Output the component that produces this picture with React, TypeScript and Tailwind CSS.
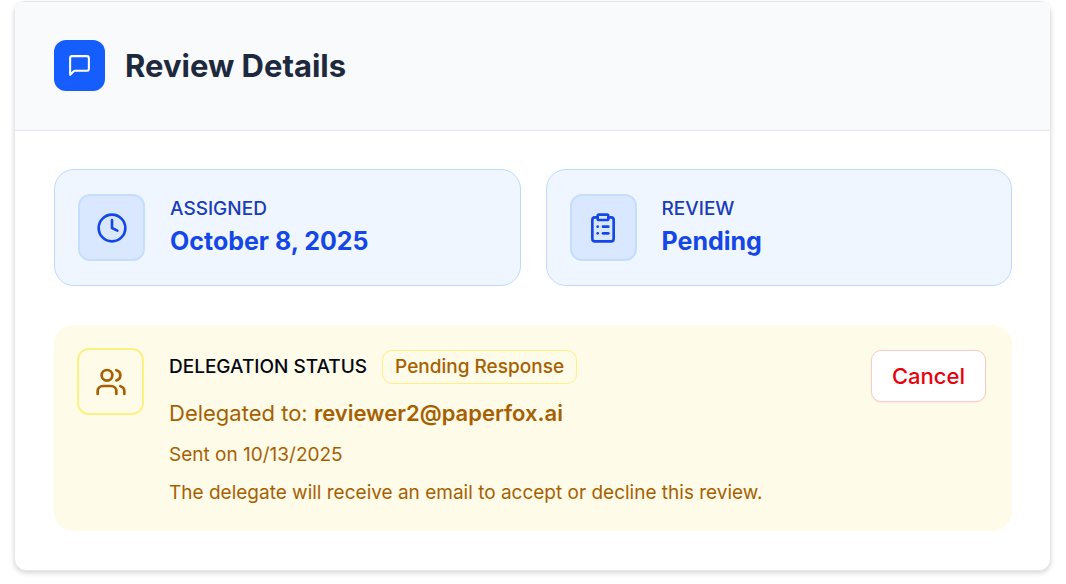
import type { ReactNode } from "react";
import { ClipboardList, Clock, Users } from "lucide-react";

const SUMMARY = [
  { label: "Assigned", value: "October 8, 2025", icon: Clock },
  { label: "Review", value: "Pending", icon: ClipboardList },
];

function IconTile({ className, children }: { className: string; children: ReactNode }) {
  return (
    <div className={`flex size-[67px] shrink-0 items-center justify-center rounded-xl border-2 ${className}`}>
      {children}
    </div>
  );
}

function MessageIcon() {
  return (
    <svg width="25" height="25" viewBox="0 0 24 24" fill="none" stroke="currentColor" strokeWidth="2" strokeLinecap="round" strokeLinejoin="round" aria-hidden="true">
      <path d="M21 15a2 2 0 0 1-2 2H7l-4 4V5a2 2 0 0 1 2-2h14a2 2 0 0 1 2 2z" />
    </svg>
  );
}

export default function App() {
  return (
    <main className="bg-white pt-px pr-[15px] pb-3 pl-[14px] font-['Inter','Liberation_Sans',sans-serif]">
      <section className="rounded-xl border border-gray-200 bg-white shadow-[0_2px_5px_rgba(0,0,0,0.16)]">
        <header className="flex items-center gap-5 border-b border-gray-200 bg-slate-50 px-[39px] pt-[38px] pb-[39px]">
          <div className="flex size-[51px] items-center justify-center rounded-xl bg-blue-600 text-white">
            <MessageIcon />
          </div>
          <h2 className="text-[31px] leading-10 font-bold text-slate-800">Review Details</h2>
        </header>

        <div className="flex flex-col gap-[39px] pt-[38px] pr-[38px] pb-[39px] pl-[39px]">
          <div className="grid grid-cols-2 gap-[25px]">
            {SUMMARY.map(({ label, value, icon: Icon }) => (
              <div key={label} className="flex items-center gap-[25px] rounded-[20px] border border-blue-200 bg-blue-50 px-[23px] py-6">
                <IconTile className="border-[#c5deff] bg-[#dae8ff] text-blue-700">
                  <Icon size={32} />
                </IconTile>
                <div className="pb-0.5">
                  <p className="text-[19px] leading-7 font-medium text-blue-800 uppercase">{label}</p>
                  <p className="text-[25px] leading-9 font-bold text-blue-700">{value}</p>
                </div>
              </div>
            ))}
          </div>

          <div className="flex items-start gap-[25px] rounded-[20px] bg-[#fefbe8] pt-[23px] pr-[26px] pb-6 pl-[23px] text-yellow-700">
            <IconTile className="border-yellow-200">
              <Users size={32} />
            </IconTile>
            <div className="min-w-0 flex-1 pt-px">
              <div className="flex items-center gap-[15px]">
                <h3 className="text-[19px] leading-9 font-medium text-gray-950 uppercase">Delegation Status</h3>
                <span className="rounded-[10px] border border-yellow-200 px-3 text-[19px] leading-8 font-medium">
                  Pending Response
                </span>
              </div>
              <p className="mt-3 text-[22px] leading-8">
                Delegated to: <span className="font-semibold">reviewer2@paperfox.ai</span>
              </p>
              <p className="mt-3 text-[19px] leading-7">Sent on 10/13/2025</p>
              <p className="mt-[10px] text-[19px] leading-7">
                The delegate will receive an email to accept or decline this review.
              </p>
            </div>
            <button
              type="button"
              className="mt-0.5 h-[52px] shrink-0 rounded-[10px] border border-red-200 bg-white px-5 text-[22px] font-medium text-red-600 shadow-xs"
            >
              Cancel
            </button>
          </div>
        </div>
      </section>
    </main>
  );
}
